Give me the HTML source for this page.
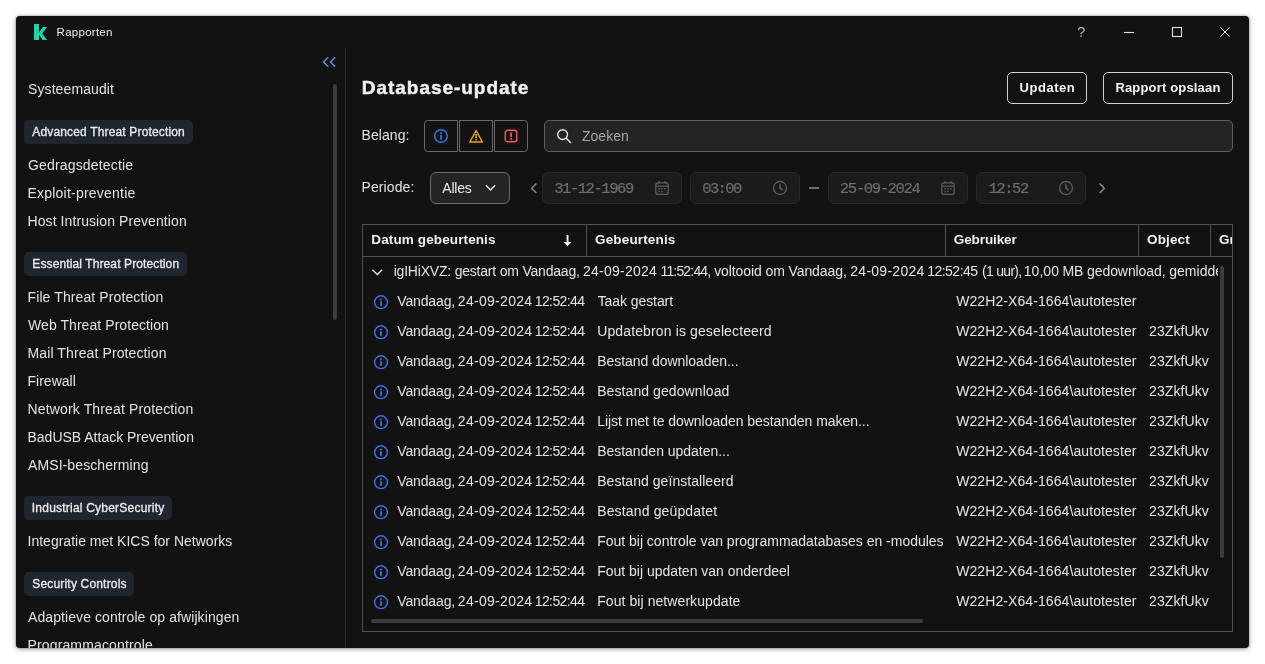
<!DOCTYPE html>
<html lang="nl">
<head>
<meta charset="utf-8">
<title>Rapporten</title>
<style>
*{box-sizing:border-box;margin:0;padding:0}
html,body{width:1265px;height:664px;overflow:hidden;background:#fff}
body{font-family:"Liberation Sans",sans-serif;color:#e6e6e6;position:relative}
#win{position:absolute;left:16px;top:16px;width:1233px;height:632px;background:#121212;border-radius:4px;overflow:hidden;box-shadow:0 0 2px rgba(0,0,0,.35),0 1px 5px rgba(0,0,0,.4)}
/* inner canvas uses full-page coordinates */
#pg{position:absolute;left:-16px;top:-16px;width:1265px;height:664px;will-change:transform}
.a,.t,.chip,.box{position:absolute}
.t{white-space:pre}
.chip{height:24px;border-radius:5px;background:#20262f}
.box{border-radius:5px}
.btn{border:1px solid #d2d2d2;top:72px;height:32px}
.sev{top:120px;width:34px;height:32px;border:1px solid #686868;background:#131313}
.inp{border:1px solid #5e5e5e;background:#242424;height:32px}
.fld{border:1px solid #272727;background:#1b1b1b;height:32px;top:172px;border-radius:6px}
.vl{position:absolute;top:225px;width:1px;height:31px;background:#525252}
#grpclip{position:absolute;left:390px;top:258px;width:828px;height:28px;overflow:hidden}
.sg span{position:absolute;top:0;white-space:pre}
</style>
</head>
<body>
<div id="win"><div id="pg">

<!-- ===== title bar ===== -->
<svg class="a" style="left:33px;top:23px" width="16" height="18" viewBox="33 23 16 18"><path d="M34 24.1h5v8.2l3.9-5.2h4.2l-4.9 6.3 4.9 6.5h-4.4l-3.7-5.2v5.2h-5z" fill="#27cfaa"/></svg>
<svg class="a" style="left:1123px;top:26px" width="12" height="12" viewBox="0 0 12 12"><path d="M1 6.5h10" stroke="#e2e2e2" stroke-width="1.1" fill="none"/></svg>
<svg class="a" style="left:1171px;top:26px" width="12" height="12" viewBox="0 0 12 12"><rect x="1.5" y="1.5" width="9" height="9" stroke="#e2e2e2" stroke-width="1.1" fill="none"/></svg>
<svg class="a" style="left:1219px;top:26px" width="12" height="12" viewBox="0 0 12 12"><path d="M1.2 1.2l9.6 9.6M10.8 1.2L1.2 10.8" stroke="#e2e2e2" stroke-width="1" fill="none"/></svg>

<!-- ===== sidebar ===== -->
<svg class="a" style="left:322px;top:56px" width="15" height="12" viewBox="0 0 15 12"><path d="M6.3 1.2L1.5 6l4.8 4.8M13.2 1.2L8.4 6l4.8 4.8" stroke="#5f93ee" stroke-width="1.4" fill="none"/></svg>
<div class="a" style="left:333px;top:84px;width:4px;height:236px;border-radius:2px;background:#3b3b41"></div>
<div class="a" style="left:345px;top:48px;width:1px;height:600px;background:#2a2a2a"></div>
<div class="chip" style="left:24px;top:120px;width:169px"></div>
<div class="chip" style="left:24px;top:252px;width:163px"></div>
<div class="chip" style="left:24px;top:496px;width:148px"></div>
<div class="chip" style="left:24px;top:572px;width:110px"></div>

<!-- ===== header / filters ===== -->
<div class="box btn" style="left:1007px;width:80px"></div>
<div class="box btn" style="left:1103px;width:130px"></div>

<div class="sev a" style="left:424px;border-radius:4px 0 0 4px"></div>
<div class="sev a" style="left:459px"></div>
<div class="sev a" style="left:494px;border-radius:0 4px 4px 0"></div>
<svg class="a" style="left:433px;top:128px" width="16" height="16" viewBox="0 0 16 16"><circle cx="8" cy="8" r="6.3" stroke="#3f72e4" stroke-width="1.4" fill="none"/><rect x="7.1" y="4.3" width="1.8" height="1.8" fill="#3f72e4"/><rect x="7.1" y="7.1" width="1.8" height="4.6" fill="#3f72e4"/></svg>
<svg class="a" style="left:468px;top:128px" width="16" height="16" viewBox="0 0 16 16"><path d="M8.1 2.5L14.3 14H1.9z" stroke="#e3a32e" stroke-width="1.5" fill="none" stroke-linejoin="round"/><rect x="7.3" y="6" width="1.6" height="4" fill="#e3a32e"/><rect x="7.3" y="10.9" width="1.6" height="1.6" fill="#e3a32e"/></svg>
<svg class="a" style="left:503px;top:128px" width="16" height="16" viewBox="0 0 16 16"><rect x="2.2" y="2.2" width="11.6" height="11.6" rx="2.6" stroke="#ea5b5b" stroke-width="1.4" fill="none"/><rect x="7.1" y="4.6" width="1.8" height="4.4" fill="#ea5b5b"/><rect x="7.1" y="10" width="1.8" height="1.8" fill="#ea5b5b"/></svg>

<div class="box inp" style="left:544px;top:120px;width:689px"></div>
<svg class="a" style="left:556px;top:128px" width="17" height="17" viewBox="0 0 17 17"><circle cx="6.6" cy="6.6" r="4.9" stroke="#e6e6e6" stroke-width="1.4" fill="none"/><path d="M10.2 10.2L15 15" stroke="#e6e6e6" stroke-width="1.5" fill="none"/></svg>

<div class="box inp" style="left:430px;top:172px;width:80px;border-color:#6c6c6c;border-radius:6px"></div>
<svg class="a" style="left:484px;top:183px" width="13" height="9" viewBox="0 0 13 9"><path d="M1.9 2.2l4.6 4.7 4.6-4.7" stroke="#e8e8e8" stroke-width="1.4" fill="none"/></svg>

<svg class="a" style="left:529px;top:182px" width="10" height="12" viewBox="0 0 10 12"><path d="M7.4 1.4L2.6 6.2l4.8 4.8" stroke="#8c8c8c" stroke-width="1.4" fill="none"/></svg>
<svg class="a" style="left:1097px;top:182px" width="10" height="12" viewBox="0 0 10 12"><path d="M2.6 1.4l4.8 4.8-4.8 4.8" stroke="#8c8c8c" stroke-width="1.4" fill="none"/></svg>
<div class="box fld" style="left:542px;width:140px"></div>
<div class="box fld" style="left:690px;width:110px"></div>
<div class="box fld" style="left:828px;width:140px"></div>
<div class="box fld" style="left:976px;width:110px"></div>
<div class="a" style="left:809px;top:187px;width:10px;height:2px;background:#6e6e6e"></div>
<!-- calendars -->
<svg class="a" style="left:654px;top:180px" width="16" height="16" viewBox="0 0 16 16"><g stroke="#5c5c5c" stroke-width="1.3" fill="none"><rect x="1.8" y="2.8" width="12.4" height="11.6" rx="2.2"/><path d="M1.8 6.2h12.4M5 1v2.4M11 1v2.4"/></g><g fill="#5c5c5c"><rect x="4.4" y="8" width="1.6" height="1.5"/><rect x="7.2" y="8" width="1.6" height="1.5"/><rect x="10" y="8" width="1.6" height="1.5"/><rect x="4.4" y="10.8" width="1.6" height="1.5"/><rect x="7.2" y="10.8" width="1.6" height="1.5"/></g></svg>
<svg class="a" style="left:940px;top:180px" width="16" height="16" viewBox="0 0 16 16"><g stroke="#5c5c5c" stroke-width="1.3" fill="none"><rect x="1.8" y="2.8" width="12.4" height="11.6" rx="2.2"/><path d="M1.8 6.2h12.4M5 1v2.4M11 1v2.4"/></g><g fill="#5c5c5c"><rect x="4.4" y="8" width="1.6" height="1.5"/><rect x="7.2" y="8" width="1.6" height="1.5"/><rect x="10" y="8" width="1.6" height="1.5"/><rect x="4.4" y="10.8" width="1.6" height="1.5"/><rect x="7.2" y="10.8" width="1.6" height="1.5"/></g></svg>
<!-- clocks -->
<svg class="a" style="left:772px;top:180px" width="16" height="16" viewBox="0 0 16 16"><g stroke="#5c5c5c" stroke-width="1.3" fill="none"><circle cx="8" cy="8" r="6.5"/><path d="M8 4.2V8l2.6 2" stroke-width="1.6"/></g></svg>
<svg class="a" style="left:1058px;top:180px" width="16" height="16" viewBox="0 0 16 16"><g stroke="#5c5c5c" stroke-width="1.3" fill="none"><circle cx="8" cy="8" r="6.5"/><path d="M8 4.2V8l2.6 2" stroke-width="1.6"/></g></svg>

<!-- ===== table frame ===== -->
<div class="a" style="left:362px;top:224px;width:871px;height:408px;border:1px solid #525252"></div>
<div class="a" style="left:363px;top:256px;width:869px;height:1px;background:#525252"></div>
<div class="vl" style="left:586px"></div>
<div class="vl" style="left:945px"></div>
<div class="vl" style="left:1138px"></div>
<div class="vl" style="left:1210px"></div>
<svg class="a" style="left:562px;top:233px" width="12" height="15" viewBox="562 233 12 15"><path d="M566.6 235h1.9v7h2.7l-3.65 4.4-3.65-4.4h2.7z" fill="#f0f0f0"/></svg>
<svg class="a" style="left:371px;top:268px" width="13" height="9" viewBox="0 0 13 9"><path d="M1.4 1.8l4.9 4.7 4.9-4.7" stroke="#e4e4e4" stroke-width="1.3" fill="none"/></svg>
<svg class="a" style="left:373px;top:295px" width="16" height="15" viewBox="0 0 16 15"><circle cx="8" cy="7.2" r="6.4" stroke="#3f72e4" stroke-width="1.4" fill="none"/><rect x="7.1" y="3.6" width="1.8" height="1.8" fill="#3f72e4"/><rect x="7.1" y="6.4" width="1.8" height="4.5" fill="#3f72e4"/></svg>
<svg class="a" style="left:373px;top:325px" width="16" height="15" viewBox="0 0 16 15"><circle cx="8" cy="7.2" r="6.4" stroke="#3f72e4" stroke-width="1.4" fill="none"/><rect x="7.1" y="3.6" width="1.8" height="1.8" fill="#3f72e4"/><rect x="7.1" y="6.4" width="1.8" height="4.5" fill="#3f72e4"/></svg>
<svg class="a" style="left:373px;top:355px" width="16" height="15" viewBox="0 0 16 15"><circle cx="8" cy="7.2" r="6.4" stroke="#3f72e4" stroke-width="1.4" fill="none"/><rect x="7.1" y="3.6" width="1.8" height="1.8" fill="#3f72e4"/><rect x="7.1" y="6.4" width="1.8" height="4.5" fill="#3f72e4"/></svg>
<svg class="a" style="left:373px;top:385px" width="16" height="15" viewBox="0 0 16 15"><circle cx="8" cy="7.2" r="6.4" stroke="#3f72e4" stroke-width="1.4" fill="none"/><rect x="7.1" y="3.6" width="1.8" height="1.8" fill="#3f72e4"/><rect x="7.1" y="6.4" width="1.8" height="4.5" fill="#3f72e4"/></svg>
<svg class="a" style="left:373px;top:415px" width="16" height="15" viewBox="0 0 16 15"><circle cx="8" cy="7.2" r="6.4" stroke="#3f72e4" stroke-width="1.4" fill="none"/><rect x="7.1" y="3.6" width="1.8" height="1.8" fill="#3f72e4"/><rect x="7.1" y="6.4" width="1.8" height="4.5" fill="#3f72e4"/></svg>
<svg class="a" style="left:373px;top:445px" width="16" height="15" viewBox="0 0 16 15"><circle cx="8" cy="7.2" r="6.4" stroke="#3f72e4" stroke-width="1.4" fill="none"/><rect x="7.1" y="3.6" width="1.8" height="1.8" fill="#3f72e4"/><rect x="7.1" y="6.4" width="1.8" height="4.5" fill="#3f72e4"/></svg>
<svg class="a" style="left:373px;top:475px" width="16" height="15" viewBox="0 0 16 15"><circle cx="8" cy="7.2" r="6.4" stroke="#3f72e4" stroke-width="1.4" fill="none"/><rect x="7.1" y="3.6" width="1.8" height="1.8" fill="#3f72e4"/><rect x="7.1" y="6.4" width="1.8" height="4.5" fill="#3f72e4"/></svg>
<svg class="a" style="left:373px;top:505px" width="16" height="15" viewBox="0 0 16 15"><circle cx="8" cy="7.2" r="6.4" stroke="#3f72e4" stroke-width="1.4" fill="none"/><rect x="7.1" y="3.6" width="1.8" height="1.8" fill="#3f72e4"/><rect x="7.1" y="6.4" width="1.8" height="4.5" fill="#3f72e4"/></svg>
<svg class="a" style="left:373px;top:535px" width="16" height="15" viewBox="0 0 16 15"><circle cx="8" cy="7.2" r="6.4" stroke="#3f72e4" stroke-width="1.4" fill="none"/><rect x="7.1" y="3.6" width="1.8" height="1.8" fill="#3f72e4"/><rect x="7.1" y="6.4" width="1.8" height="4.5" fill="#3f72e4"/></svg>
<svg class="a" style="left:373px;top:565px" width="16" height="15" viewBox="0 0 16 15"><circle cx="8" cy="7.2" r="6.4" stroke="#3f72e4" stroke-width="1.4" fill="none"/><rect x="7.1" y="3.6" width="1.8" height="1.8" fill="#3f72e4"/><rect x="7.1" y="6.4" width="1.8" height="4.5" fill="#3f72e4"/></svg>
<svg class="a" style="left:373px;top:595px" width="16" height="15" viewBox="0 0 16 15"><circle cx="8" cy="7.2" r="6.4" stroke="#3f72e4" stroke-width="1.4" fill="none"/><rect x="7.1" y="3.6" width="1.8" height="1.8" fill="#3f72e4"/><rect x="7.1" y="6.4" width="1.8" height="4.5" fill="#3f72e4"/></svg>
<div class="a" style="left:1220px;top:266px;width:4px;height:292px;border-radius:2px;background:#3b3b41"></div>
<div class="a" style="left:371px;top:619px;width:552px;height:4px;border-radius:2px;background:#3b3b41"></div>

<!-- ===== text ===== -->
<div class="t" style="left:56.6px;top:22px;font-size:11.5px;line-height:20px;color:#eeeeee;letter-spacing:0.261px;">Rapporten</div>
<div class="t" style="left:1077.2px;top:22px;font-size:14.5px;line-height:20px;color:#b4b4b4;">?</div>
<div class="t" style="left:28.0px;top:79px;font-size:14px;line-height:20px;color:#e2e2e2;letter-spacing:0.097px;">Systeemaudit</div>
<div class="t" style="left:28.0px;top:155px;font-size:14px;line-height:20px;color:#e2e2e2;letter-spacing:0.168px;">Gedragsdetectie</div>
<div class="t" style="left:27.5px;top:183px;font-size:14px;line-height:20px;color:#e2e2e2;letter-spacing:0.219px;">Exploit-preventie</div>
<div class="t" style="left:27.5px;top:211px;font-size:14px;line-height:20px;color:#e2e2e2;letter-spacing:0.083px;">Host Intrusion Prevention</div>
<div class="t" style="left:27.5px;top:287px;font-size:14px;line-height:20px;color:#e2e2e2;letter-spacing:0.107px;">File Threat Protection</div>
<div class="t" style="left:28.0px;top:315px;font-size:14px;line-height:20px;color:#e2e2e2;letter-spacing:0.064px;">Web Threat Protection</div>
<div class="t" style="left:27.5px;top:343px;font-size:14px;line-height:20px;color:#e2e2e2;letter-spacing:0.107px;">Mail Threat Protection</div>
<div class="t" style="left:27.5px;top:371px;font-size:14px;line-height:20px;color:#e2e2e2;letter-spacing:0.012px;">Firewall</div>
<div class="t" style="left:27.5px;top:399px;font-size:14px;line-height:20px;color:#e2e2e2;letter-spacing:0.144px;">Network Threat Protection</div>
<div class="t" style="left:27.5px;top:427px;font-size:14px;line-height:20px;color:#e2e2e2;letter-spacing:-0.005px;">BadUSB Attack Prevention</div>
<div class="t" style="left:28.0px;top:455px;font-size:14px;line-height:20px;color:#e2e2e2;letter-spacing:0.096px;">AMSI-bescherming</div>
<div class="t" style="left:27.5px;top:531px;font-size:14px;line-height:20px;color:#e2e2e2;letter-spacing:0.006px;">Integratie met KICS for Networks</div>
<div class="t" style="left:28.0px;top:607px;font-size:14px;line-height:20px;color:#e2e2e2;letter-spacing:0.085px;">Adaptieve controle op afwijkingen</div>
<div class="t" style="left:27.5px;top:635px;font-size:14px;line-height:20px;color:#e2e2e2;letter-spacing:0.141px;">Programmacontrole</div>
<div class="t" style="left:32.3px;top:122px;font-size:12px;line-height:20px;color:#ececec;letter-spacing:0.157px;-webkit-text-stroke:.3px #ececec;">Advanced Threat Protection</div>
<div class="t" style="left:32.3px;top:254px;font-size:12px;line-height:20px;color:#ececec;letter-spacing:0.112px;-webkit-text-stroke:.3px #ececec;">Essential Threat Protection</div>
<div class="t" style="left:31.8px;top:498px;font-size:12px;line-height:20px;color:#ececec;letter-spacing:0.218px;-webkit-text-stroke:.3px #ececec;">Industrial CyberSecurity</div>
<div class="t" style="left:32.3px;top:574px;font-size:12px;line-height:20px;color:#ececec;letter-spacing:0.177px;-webkit-text-stroke:.3px #ececec;">Security Controls</div>
<div class="t" style="left:361.8px;top:75px;font-size:19px;line-height:26px;color:#f0f0f0;letter-spacing:0.962px;font-weight:bold;-webkit-text-stroke:.45px #f0f0f0;">Database-update</div>
<div class="t" style="left:1019.5px;top:78px;font-size:13px;line-height:20px;color:#f4f4f4;letter-spacing:0.54px;font-weight:bold;">Updaten</div>
<div class="t" style="left:1115.4px;top:78px;font-size:13px;line-height:20px;color:#f4f4f4;letter-spacing:0.17px;font-weight:bold;">Rapport opslaan</div>
<div class="t" style="left:361.5px;top:125px;font-size:14px;line-height:20px;color:#e2e2e2;letter-spacing:0.068px;">Belang:</div>
<div class="t" style="left:361.5px;top:177px;font-size:14px;line-height:20px;color:#e2e2e2;letter-spacing:0.106px;">Periode:</div>
<div class="t" style="left:582.0px;top:126px;font-size:14px;line-height:20px;color:#a6a6a6;letter-spacing:0.018px;">Zoeken</div>
<div class="t" style="left:442.3px;top:178px;font-size:14px;line-height:20px;color:#ececec;letter-spacing:-0.236px;">Alles</div>
<div class="t" style="left:554.2px;top:179px;font-size:15.5px;line-height:20px;color:#6e6e6e;letter-spacing:-1.446px;font-family:'Liberation Mono',monospace;-webkit-text-stroke:.2px #6e6e6e;">31-12-1969</div>
<div class="t" style="left:702.3px;top:179px;font-size:15.5px;line-height:20px;color:#6e6e6e;letter-spacing:-1.652px;font-family:'Liberation Mono',monospace;-webkit-text-stroke:.2px #6e6e6e;">03:00</div>
<div class="t" style="left:839.8px;top:179px;font-size:15.5px;line-height:20px;color:#6e6e6e;letter-spacing:-1.335px;font-family:'Liberation Mono',monospace;-webkit-text-stroke:.2px #6e6e6e;">25-09-2024</div>
<div class="t" style="left:988.4px;top:179px;font-size:15.5px;line-height:20px;color:#6e6e6e;letter-spacing:-1.402px;font-family:'Liberation Mono',monospace;-webkit-text-stroke:.2px #6e6e6e;">12:52</div>
<div class="t" style="left:371.3px;top:230px;font-size:13.5px;line-height:20px;color:#f0f0f0;letter-spacing:0.121px;font-weight:bold;">Datum gebeurtenis</div>
<div class="t" style="left:595.0px;top:230px;font-size:13.5px;line-height:20px;color:#f0f0f0;letter-spacing:0.154px;font-weight:bold;">Gebeurtenis</div>
<div class="t" style="left:953.8px;top:230px;font-size:13.5px;line-height:20px;color:#f0f0f0;letter-spacing:-0.103px;font-weight:bold;">Gebruiker</div>
<div class="t" style="left:1147.0px;top:230px;font-size:13.5px;line-height:20px;color:#f0f0f0;letter-spacing:0.137px;font-weight:bold;">Object</div>
<div class="t" style="left:1219.0px;top:230px;font-size:13.5px;line-height:20px;color:#f0f0f0;font-weight:bold;">Groep</div>
<div class="t" style="left:597.7px;top:291px;font-size:14px;line-height:20px;color:#e4e4e4;letter-spacing:-0.079px;">Taak gestart</div>
<div class="t" style="left:956.2px;top:291px;font-size:14px;line-height:20px;color:#e4e4e4;letter-spacing:0.085px;">W22H2-X64-1664\autotester</div>
<div class="t" style="left:597.2px;top:321px;font-size:14px;line-height:20px;color:#e4e4e4;letter-spacing:0.127px;">Updatebron is geselecteerd</div>
<div class="t" style="left:956.2px;top:321px;font-size:14px;line-height:20px;color:#e4e4e4;letter-spacing:0.085px;">W22H2-X64-1664\autotester</div>
<div class="t" style="left:1149.0px;top:321px;font-size:14px;line-height:20px;color:#e4e4e4;letter-spacing:0.097px;">23ZkfUkv</div>
<div class="t" style="left:597.2px;top:351px;font-size:14px;line-height:20px;color:#e4e4e4;letter-spacing:-0.053px;">Bestand downloaden...</div>
<div class="t" style="left:956.2px;top:351px;font-size:14px;line-height:20px;color:#e4e4e4;letter-spacing:0.085px;">W22H2-X64-1664\autotester</div>
<div class="t" style="left:1149.0px;top:351px;font-size:14px;line-height:20px;color:#e4e4e4;letter-spacing:0.097px;">23ZkfUkv</div>
<div class="t" style="left:597.2px;top:381px;font-size:14px;line-height:20px;color:#e4e4e4;letter-spacing:0.083px;">Bestand gedownload</div>
<div class="t" style="left:956.2px;top:381px;font-size:14px;line-height:20px;color:#e4e4e4;letter-spacing:0.085px;">W22H2-X64-1664\autotester</div>
<div class="t" style="left:1149.0px;top:381px;font-size:14px;line-height:20px;color:#e4e4e4;letter-spacing:0.097px;">23ZkfUkv</div>
<div class="t" style="left:597.2px;top:411px;font-size:14px;line-height:20px;color:#e4e4e4;letter-spacing:-0.038px;">Lijst met te downloaden bestanden maken...</div>
<div class="t" style="left:956.2px;top:411px;font-size:14px;line-height:20px;color:#e4e4e4;letter-spacing:0.085px;">W22H2-X64-1664\autotester</div>
<div class="t" style="left:1149.0px;top:411px;font-size:14px;line-height:20px;color:#e4e4e4;letter-spacing:0.097px;">23ZkfUkv</div>
<div class="t" style="left:597.2px;top:441px;font-size:14px;line-height:20px;color:#e4e4e4;letter-spacing:-0.027px;">Bestanden updaten...</div>
<div class="t" style="left:956.2px;top:441px;font-size:14px;line-height:20px;color:#e4e4e4;letter-spacing:0.085px;">W22H2-X64-1664\autotester</div>
<div class="t" style="left:1149.0px;top:441px;font-size:14px;line-height:20px;color:#e4e4e4;letter-spacing:0.097px;">23ZkfUkv</div>
<div class="t" style="left:597.2px;top:471px;font-size:14px;line-height:20px;color:#e4e4e4;letter-spacing:0.043px;">Bestand geïnstalleerd</div>
<div class="t" style="left:956.2px;top:471px;font-size:14px;line-height:20px;color:#e4e4e4;letter-spacing:0.085px;">W22H2-X64-1664\autotester</div>
<div class="t" style="left:1149.0px;top:471px;font-size:14px;line-height:20px;color:#e4e4e4;letter-spacing:0.097px;">23ZkfUkv</div>
<div class="t" style="left:597.2px;top:501px;font-size:14px;line-height:20px;color:#e4e4e4;letter-spacing:0.147px;">Bestand geüpdatet</div>
<div class="t" style="left:956.2px;top:501px;font-size:14px;line-height:20px;color:#e4e4e4;letter-spacing:0.085px;">W22H2-X64-1664\autotester</div>
<div class="t" style="left:1149.0px;top:501px;font-size:14px;line-height:20px;color:#e4e4e4;letter-spacing:0.097px;">23ZkfUkv</div>
<div class="t" style="left:597.2px;top:531px;font-size:14px;line-height:20px;color:#e4e4e4;letter-spacing:-0.013px;">Fout bij controle van programmadatabases en -modules</div>
<div class="t" style="left:956.2px;top:531px;font-size:14px;line-height:20px;color:#e4e4e4;letter-spacing:0.085px;">W22H2-X64-1664\autotester</div>
<div class="t" style="left:1149.0px;top:531px;font-size:14px;line-height:20px;color:#e4e4e4;letter-spacing:0.097px;">23ZkfUkv</div>
<div class="t" style="left:597.2px;top:561px;font-size:14px;line-height:20px;color:#e4e4e4;letter-spacing:-0.011px;">Fout bij updaten van onderdeel</div>
<div class="t" style="left:956.2px;top:561px;font-size:14px;line-height:20px;color:#e4e4e4;letter-spacing:0.085px;">W22H2-X64-1664\autotester</div>
<div class="t" style="left:1149.0px;top:561px;font-size:14px;line-height:20px;color:#e4e4e4;letter-spacing:0.097px;">23ZkfUkv</div>
<div class="t" style="left:597.2px;top:591px;font-size:14px;line-height:20px;color:#e4e4e4;letter-spacing:0.074px;">Fout bij netwerkupdate</div>
<div class="t" style="left:956.2px;top:591px;font-size:14px;line-height:20px;color:#e4e4e4;letter-spacing:0.085px;">W22H2-X64-1664\autotester</div>
<div class="t" style="left:1149.0px;top:591px;font-size:14px;line-height:20px;color:#e4e4e4;letter-spacing:0.097px;">23ZkfUkv</div>
<div class="t sg" style="left:397.3px;top:291px;font-size:14px;line-height:20px;color:#e4e4e4"><span style="left:0.0px;letter-spacing:-0.145px">Vandaag, </span><span style="left:60.5px;letter-spacing:0.297px">24-09-2024 </span><span style="left:137.4px;letter-spacing:-0.587px">12:52:44</span></div>
<div class="t sg" style="left:397.3px;top:321px;font-size:14px;line-height:20px;color:#e4e4e4"><span style="left:0.0px;letter-spacing:-0.145px">Vandaag, </span><span style="left:60.5px;letter-spacing:0.297px">24-09-2024 </span><span style="left:137.4px;letter-spacing:-0.587px">12:52:44</span></div>
<div class="t sg" style="left:397.3px;top:351px;font-size:14px;line-height:20px;color:#e4e4e4"><span style="left:0.0px;letter-spacing:-0.145px">Vandaag, </span><span style="left:60.5px;letter-spacing:0.297px">24-09-2024 </span><span style="left:137.4px;letter-spacing:-0.587px">12:52:44</span></div>
<div class="t sg" style="left:397.3px;top:381px;font-size:14px;line-height:20px;color:#e4e4e4"><span style="left:0.0px;letter-spacing:-0.145px">Vandaag, </span><span style="left:60.5px;letter-spacing:0.297px">24-09-2024 </span><span style="left:137.4px;letter-spacing:-0.587px">12:52:44</span></div>
<div class="t sg" style="left:397.3px;top:411px;font-size:14px;line-height:20px;color:#e4e4e4"><span style="left:0.0px;letter-spacing:-0.145px">Vandaag, </span><span style="left:60.5px;letter-spacing:0.297px">24-09-2024 </span><span style="left:137.4px;letter-spacing:-0.587px">12:52:44</span></div>
<div class="t sg" style="left:397.3px;top:441px;font-size:14px;line-height:20px;color:#e4e4e4"><span style="left:0.0px;letter-spacing:-0.145px">Vandaag, </span><span style="left:60.5px;letter-spacing:0.297px">24-09-2024 </span><span style="left:137.4px;letter-spacing:-0.587px">12:52:44</span></div>
<div class="t sg" style="left:397.3px;top:471px;font-size:14px;line-height:20px;color:#e4e4e4"><span style="left:0.0px;letter-spacing:-0.145px">Vandaag, </span><span style="left:60.5px;letter-spacing:0.297px">24-09-2024 </span><span style="left:137.4px;letter-spacing:-0.587px">12:52:44</span></div>
<div class="t sg" style="left:397.3px;top:501px;font-size:14px;line-height:20px;color:#e4e4e4"><span style="left:0.0px;letter-spacing:-0.145px">Vandaag, </span><span style="left:60.5px;letter-spacing:0.297px">24-09-2024 </span><span style="left:137.4px;letter-spacing:-0.587px">12:52:44</span></div>
<div class="t sg" style="left:397.3px;top:531px;font-size:14px;line-height:20px;color:#e4e4e4"><span style="left:0.0px;letter-spacing:-0.145px">Vandaag, </span><span style="left:60.5px;letter-spacing:0.297px">24-09-2024 </span><span style="left:137.4px;letter-spacing:-0.587px">12:52:44</span></div>
<div class="t sg" style="left:397.3px;top:561px;font-size:14px;line-height:20px;color:#e4e4e4"><span style="left:0.0px;letter-spacing:-0.145px">Vandaag, </span><span style="left:60.5px;letter-spacing:0.297px">24-09-2024 </span><span style="left:137.4px;letter-spacing:-0.587px">12:52:44</span></div>
<div class="t sg" style="left:397.3px;top:591px;font-size:14px;line-height:20px;color:#e4e4e4"><span style="left:0.0px;letter-spacing:-0.145px">Vandaag, </span><span style="left:60.5px;letter-spacing:0.297px">24-09-2024 </span><span style="left:137.4px;letter-spacing:-0.587px">12:52:44</span></div>
<div id="grpclip"><div class="t sg" style="left:3.7px;top:3px;font-size:14px;line-height:20px;color:#e4e4e4"><span style="left:0.0px;letter-spacing:-0.206px">igIHiXVZ: gestart om Vandaag, </span><span style="left:189.3px;letter-spacing:0.253px">24-09-2024 </span><span style="left:266.8px;letter-spacing:-0.832px">11:52:44, </span><span style="left:320.5px;letter-spacing:-0.095px">voltooid om Vandaag, </span><span style="left:456.6px;letter-spacing:0.264px">24-09-2024 </span><span style="left:533.5px;letter-spacing:-0.516px">12:52:45 </span><span style="left:588.4px;letter-spacing:-0.719px">(1 uur), </span><span style="left:630.1px;letter-spacing:0.038px">10,00 </span><span style="left:668.8px;letter-spacing:-0.092px">MB gedownload, </span><span style="left:775.6px;letter-spacing:0px">gemiddelde snelheid</span></div></div>
<!-- mask to clip the partial header label at the table's right border -->
<div class="a" style="left:1232px;top:225px;width:1px;height:31px;background:#525252"></div>
<div class="a" style="left:1233px;top:225px;width:16px;height:31px;background:#121212"></div>

</div></div>
</body>
</html>
